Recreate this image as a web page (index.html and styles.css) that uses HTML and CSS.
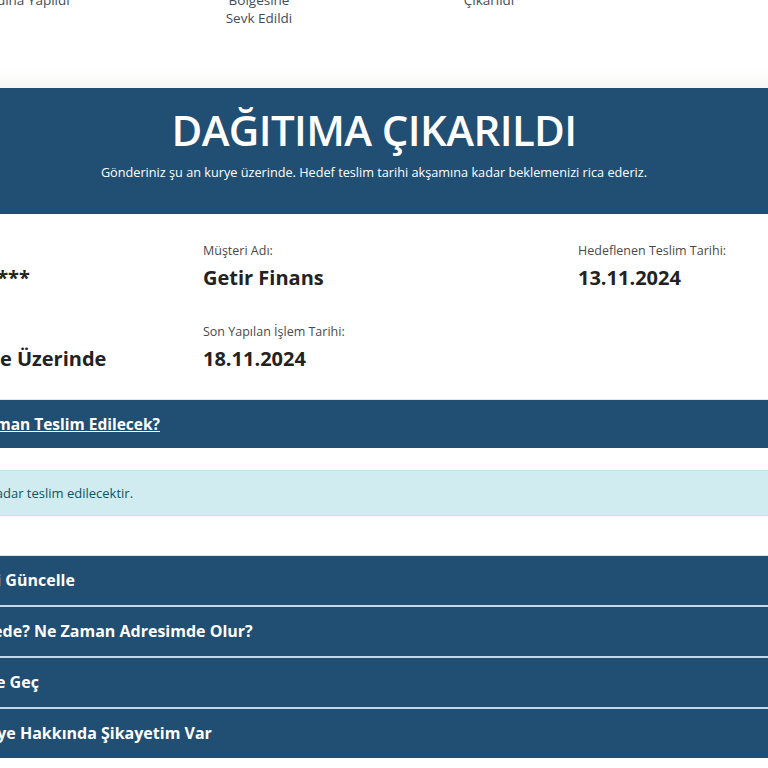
FILE: index.html
```html
<!DOCTYPE html>
<html lang="tr">

<head>
    <meta charset="UTF-8">
    <meta name="viewport" content="width=device-width, initial-scale=1.0">
    <title>Gönderi Takip - Dağıtıma Çıkarıldı</title>

    <link rel="stylesheet" href="styles.css">
</head>

<body>
    <div class="page">
        <div class="steps">
            <div class="step">Kabul<br>Adına Yapıldı</div>
            <div class="step">Dağıtım<br>Bölgesine<br>Sevk Edildi</div>
            <div class="step">Dağıtıma<br>Çıkarıldı</div>
            <div class="step">Teslim Edildi</div>
        </div>

        <div class="status-banner">
            <h1>DAĞITIMA ÇIKARILDI</h1>
            <p>Gönderiniz şu an kurye üzerinde. Hedef teslim tarihi akşamına kadar beklemenizi rica ederiz.</p>
        </div>

        <div class="info-grid">
            <div class="info-item">
                <span class="info-label">No:</span>
                <span class="info-value">1******</span>
            </div>
            <div class="info-item">
                <span class="info-label">Müşteri Adı:</span>
                <span class="info-value">Getir Finans</span>
            </div>
            <div class="info-item">
                <span class="info-label">Hedeflenen Teslim Tarihi:</span>
                <span class="info-value">13.11.2024</span>
            </div>
            <div class="info-item">
                <span class="info-label">Durum:</span>
                <span class="info-value">Kurye Üzerinde</span>
            </div>
            <div class="info-item">
                <span class="info-label">Son Yapılan İşlem Tarihi:</span>
                <span class="info-value">18.11.2024</span>
            </div>
        </div>

        <a class="bar bar-link" href="#">Kargom Ne Zaman Teslim Edilecek?</a>

        <div class="alert-info">Gönderiniz akşama kadar teslim edilecektir.</div>

        <div class="bar-list">
            <div class="bar">Alıcı Adresini Güncelle</div>
            <div class="bar">Kargom Nerede? Ne Zaman Adresimde Olur?</div>
            <div class="bar">Canlı Desteğe Geç</div>
            <div class="bar">Sorumlu Kurye Hakkında Şikayetim Var</div>
        </div>
    </div>
</body>

</html>
```

FILE: styles.css
```css
body {
    margin: 0;
    font-family: "Open Sans", Arial, sans-serif;
    background-color: white;
    overflow: hidden;
}

.page {
    width: 1148px;
    margin-left: -200px;
}

/* shipment steps */
.steps {
    display: grid;
    grid-template-columns: repeat(4, 230px);
    justify-content: center;
    margin-top: -27px;
    margin-bottom: 61px;
    font-size: 13.5px;
    line-height: 18px;
    color: #3f4d5e;
    text-align: center;
}

.status-banner {
    background-color: #214e73;
    color: white;
    text-align: center;
    padding: 15px 0 33px;
    box-shadow: 0 -6px 14px rgba(120, 90, 60, 0.08);
}

.status-banner h1 {
    margin: 0;
    font-size: 42px;
    font-weight: 600;
    letter-spacing: -0.6px;
    line-height: 53px;
}

.status-banner p {
    margin: 7px 0 0;
    font-size: 12.7px;
    line-height: 18px;
}

/* customer info */
.info-grid {
    display: grid;
    grid-template-columns: 250px 375px 1fr;
    row-gap: 31px;
    padding: 28px 0 26px 153px;
}

.info-item {
    display: flex;
    flex-direction: column;
    gap: 4px;
}

.info-label {
    font-size: 12.5px;
    line-height: 18px;
    color: #4a4a4a;
}

.info-value {
    font-size: 20px;
    line-height: 28px;
    font-weight: 700;
    color: #222;
}

.bar {
    display: block;
    height: 49px;
    line-height: 49px;
    padding-left: 97px;
    background-color: #214e73;
    color: white;
    font-size: 16px;
    font-weight: 700;
}

.bar-link {
    height: 48px;
    line-height: 48px;
    padding-left: 87px;
    border-top: 1px solid #dfe7ee;
    font-size: 15.5px;
    text-decoration: underline;
}

.alert-info {
    margin: 22px 0 39px;
    padding: 0 0 0 68px;
    height: 44px;
    line-height: 44px;
    background-color: #d1ecf1;
    border: 1px solid #bee5eb;
    color: #0c5460;
    font-size: 13px;
}

.bar-list {
    border-top: 1px solid #dfe7ee;
}

.bar-list .bar + .bar {
    border-top: 2px solid #c3d9ea;
}
```
